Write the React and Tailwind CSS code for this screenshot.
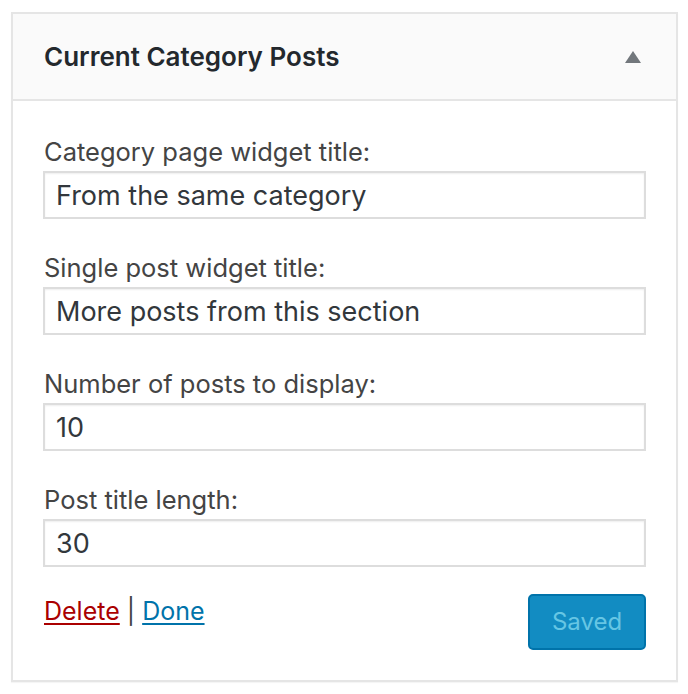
import React from 'react';

const fields = [
	{ label: 'Category page widget title:', value: 'From the same category' },
	{ label: 'Single post widget title:', value: 'More posts from this section' },
	{ label: 'Number of posts to display:', value: '10' },
	{ label: 'Post title length:', value: '30' },
];

export default function App() {
	return (
		<div
			className="min-h-screen bg-white pt-[12px] pl-[11px]"
			style={{ fontFamily: 'Inter, "Noto Sans", sans-serif' }}
		>
			<div className="w-[667px] border-2 border-[#e5e5e5] bg-white shadow-[0_1px_1px_rgba(0,0,0,0.04)]">
				<div className="flex h-[87px] items-center justify-between border-b-2 border-[#e5e5e5] bg-[#fafafa] pl-[31px] pr-[35px]">
					<h3 className="text-[26px] font-semibold text-[#23282d]">
						Current Category Posts
					</h3>
					<svg width="16" height="12" viewBox="0 0 16 12">
						<polygon points="8,0 16,12 0,12" fill="#72777c" />
					</svg>
				</div>
				<div className="px-[30px] pt-[36px] pb-[30px]">
					<div className="flex flex-col gap-[34px]">
						{fields.map((f) => (
							<div key={f.label}>
								<label className="block pl-px text-[25.5px] leading-[30px] text-[#444]">
									{f.label}
								</label>
								<input
									type="text"
									defaultValue={f.value}
									className="mt-[4px] block h-[48px] w-[603px] border-2 border-[#ddd] bg-white px-[11px] text-[27px] text-[#32373c] shadow-[inset_0_1px_2px_rgba(0,0,0,0.07)] outline-none"
								/>
							</div>
						))}
					</div>
					<div className="mt-[27px] flex items-start justify-between">
						<div className="pl-px pt-[2px] text-[25px] leading-[30px] text-[#444]">
							<a href="#" className="text-[#a00] underline underline-offset-[3px]">
								Delete
							</a>{' '}
							|{' '}
							<a href="#" className="text-[#0073aa] underline underline-offset-[3px]">
								Done
							</a>
						</div>
						<button
							disabled
							className="h-[56px] w-[118px] rounded-[5px] border-2 border-[#0073aa] bg-[#128cc2] text-[24px] text-[#66c6e4]"
						>
							Saved
						</button>
					</div>
				</div>
			</div>
		</div>
	);
}
